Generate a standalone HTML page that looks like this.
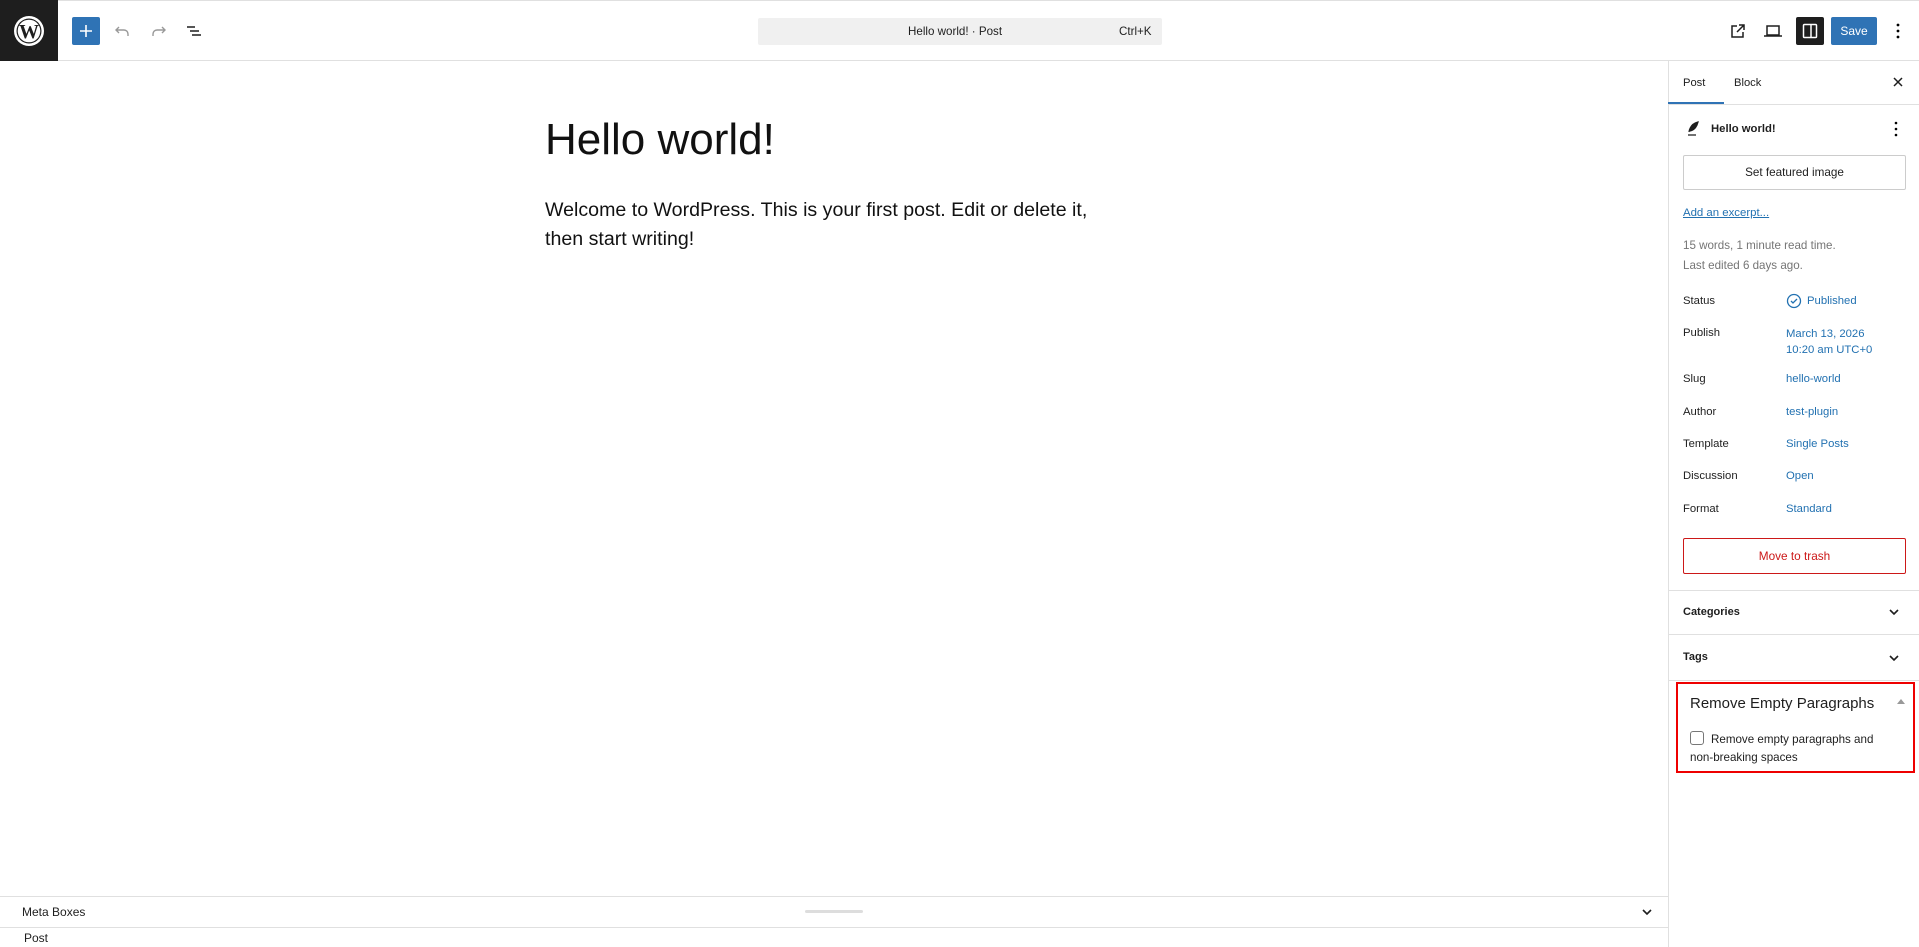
<!DOCTYPE html>
<html><head><meta charset="utf-8"><style>
*{box-sizing:border-box;margin:0;padding:0}
body{width:1919px;height:947px;overflow:hidden;background:#fff;font-family:"Liberation Sans",sans-serif;color:#1e1e1e;position:relative;font-size:11.5px}
.a{position:absolute}
.hdr{left:0;top:0;width:1919px;height:61px;border-top:1px solid #e0e0e0;border-bottom:1px solid #e0e0e0}
.logo{left:0;top:0;width:58px;height:61px;background:#1e1e1e}
.side{left:1668px;top:61px;width:251px;height:886px;border-left:1px solid #e0e0e0}
.lbl{left:1683px;font-size:11.3px;color:#1e1e1e}
.val{left:1786px;font-size:11.3px;color:#2271b1}
.hr{left:1668px;width:251px;height:1px;background:#e0e0e0}
svg{display:block}
</style></head><body>
<div class="a hdr"></div>
<div class="a logo"><svg width="58" height="61" viewBox="0 0 58 61"><circle cx="29" cy="31" r="15" fill="#fff"/><circle cx="29" cy="31" r="12.5" fill="#1e1e1e"/><circle cx="29" cy="31" r="11.3" fill="#fff"/><text x="29" y="38" text-anchor="middle" font-family="Liberation Serif,serif" font-size="20" font-weight="bold" fill="#1e1e1e">W</text></svg></div>
<div class="a" style="left:72px;top:17px;width:28px;height:28px;background:#2f73b5;border-radius:2px"><svg width="28" height="28"><path d="M14 8v12M8 14h12" stroke="#fff" stroke-width="1.6"/></svg></div>
<svg class="a" style="left:113px;top:21px" width="20" height="20"><path d="M6 6l-3 3 3 3M3 9h8a4 4 0 0 1 4 4v2" fill="none" stroke="#999" stroke-width="1.4"/></svg>
<svg class="a" style="left:148px;top:21px" width="20" height="20"><path d="M14 6l3 3-3 3M17 9H9a4 4 0 0 0-4 4v2" fill="none" stroke="#999" stroke-width="1.4"/></svg>
<svg class="a" style="left:185px;top:21px" width="20" height="20"><path d="M2 6h8M5 10h9M7 14h9" stroke="#1e1e1e" stroke-width="1.6"/></svg>
<div class="a" style="left:758px;top:18px;width:404px;height:27px;background:#f0f0f0;border-radius:2px"></div>
<div class="a" style="left:908px;top:25px;font-size:11.6px">Hello world! · Post</div>
<div class="a" style="left:1119px;top:25px;font-size:11.6px">Ctrl+K</div>
<svg class="a" style="left:1729px;top:22px" width="18" height="18"><path d="M8 4H3v11h11v-5M10 3h5v5M15 3l-7 7" fill="none" stroke="#1e1e1e" stroke-width="1.5"/></svg>
<svg class="a" style="left:1763px;top:22px" width="20" height="18"><path d="M4 4h12v9H4zM1 14h18" fill="none" stroke="#1e1e1e" stroke-width="1.5"/></svg>
<div class="a" style="left:1796px;top:17px;width:28px;height:28px;background:#1e1e1e;border-radius:2px"><svg width="28" height="28"><rect x="7.5" y="7.5" width="13" height="13" rx="1" fill="none" stroke="#fff" stroke-width="1.5"/><path d="M15 8v12" stroke="#fff" stroke-width="1.5"/></svg></div>
<div class="a" style="left:1831px;top:17px;width:46px;height:28px;background:#2f73b5;border-radius:2px;color:#fff;font-size:12px;text-align:center;line-height:28px">Save</div>
<svg class="a" style="left:1894px;top:21px" width="8" height="20"><circle cx="4" cy="4" r="1.4"/><circle cx="4" cy="10" r="1.4"/><circle cx="4" cy="16" r="1.4"/></svg>

<div class="a" style="left:545px;top:115px;font-size:44px;color:#111">Hello world!</div>
<div class="a" style="left:545px;top:196px;font-size:19.6px;line-height:28.5px;color:#111;width:560px">Welcome to WordPress. This is your first post. Edit or delete it, then start writing!</div>

<div class="a" style="left:0;top:896px;width:1668px;height:1px;background:#e0e0e0"></div>
<div class="a" style="left:22px;top:905px;font-size:12px">Meta Boxes</div>
<div class="a" style="left:805px;top:910px;width:58px;height:3px;background:#ddd;border-radius:2px"></div>
<svg class="a" style="left:1640px;top:905px" width="14" height="14"><path d="M3 5l4 4 4-4" fill="none" stroke="#1e1e1e" stroke-width="1.6"/></svg>
<div class="a" style="left:0;top:927px;width:1668px;height:1px;background:#e0e0e0"></div>
<div class="a" style="left:24px;top:931px;font-size:12px">Post</div>

<div class="a side"></div>
<div class="a lbl" style="top:77px;font-size:11.2px">Post</div>
<div class="a lbl" style="left:1734px;top:77px;font-size:11.2px">Block</div>
<div class="a" style="left:1668px;top:102px;width:56px;height:2px;background:#2f73b5"></div>
<div class="a hr" style="top:104px"></div>
<svg class="a" style="left:1891px;top:75px" width="14" height="14"><path d="M3 3l8 8M11 3l-8 8" stroke="#1e1e1e" stroke-width="1.5"/></svg>
<svg class="a" style="left:1686px;top:120px" width="14" height="16"><path d="M3 12C4 6 8 3 12 2 11 6 9 10 4 11M2 15h8" fill="#1e1e1e" stroke="#1e1e1e" stroke-width="1.3"/></svg>
<div class="a" style="left:1711px;top:123px;font-weight:bold;font-size:11.3px">Hello world!</div>
<svg class="a" style="left:1892px;top:119px" width="8" height="20"><circle cx="4" cy="4" r="1.3"/><circle cx="4" cy="10" r="1.3"/><circle cx="4" cy="16" r="1.3"/></svg>
<div class="a" style="left:1683px;top:155px;width:223px;height:35px;border:1px solid #ccc;border-radius:2px;text-align:center;line-height:33px;font-size:11.7px">Set featured image</div>
<div class="a" style="left:1683px;top:207px;color:#2271b1;text-decoration:underline;font-size:11.4px">Add an excerpt...</div>
<div class="a" style="left:1683px;top:236px;color:#757575;font-size:11.6px;line-height:19.5px">15 words, 1 minute read time.<br>Last edited 6 days ago.</div>
<div class="a lbl" style="top:295px">Status</div>
<svg class="a" style="left:1786px;top:293px" width="16" height="16"><circle cx="8" cy="8" r="6.5" fill="none" stroke="#2271b1" stroke-width="1.3"/><path d="M5 8l2 2 4-4" fill="none" stroke="#2271b1" stroke-width="1.3"/></svg>
<div class="a val" style="left:1807px;top:295px">Published</div>
<div class="a lbl" style="top:327px">Publish</div>
<div class="a val" style="top:326px;line-height:16px">March 13, 2026<br>10:20 am UTC+0</div>
<div class="a lbl" style="top:373px">Slug</div><div class="a val" style="top:373px">hello-world</div>
<div class="a lbl" style="top:406px">Author</div><div class="a val" style="top:406px">test-plugin</div>
<div class="a lbl" style="top:438px">Template</div><div class="a val" style="top:438px">Single Posts</div>
<div class="a lbl" style="top:470px">Discussion</div><div class="a val" style="top:470px">Open</div>
<div class="a lbl" style="top:503px">Format</div><div class="a val" style="top:503px">Standard</div>
<div class="a" style="left:1683px;top:538px;width:223px;height:36px;border:1px solid #cc1818;border-radius:2px;text-align:center;line-height:34px;color:#cc1818;font-size:11.8px">Move to trash</div>
<div class="a hr" style="top:590px"></div>
<div class="a" style="left:1683px;top:606px;font-weight:bold;font-size:11px">Categories</div>
<svg class="a" style="left:1887px;top:605px" width="14" height="14"><path d="M3 5l4 4 4-4" fill="none" stroke="#1e1e1e" stroke-width="1.6"/></svg>
<div class="a hr" style="top:634px"></div>
<div class="a" style="left:1683px;top:651px;font-weight:bold;font-size:11px">Tags</div>
<svg class="a" style="left:1887px;top:651px" width="14" height="14"><path d="M3 5l4 4 4-4" fill="none" stroke="#1e1e1e" stroke-width="1.6"/></svg>
<div class="a hr" style="top:680px"></div>
<div class="a" style="left:1676px;top:682px;width:239px;height:91px;border:2px solid #e00"></div>
<div class="a" style="left:1690px;top:695px;font-size:15px">Remove Empty Paragraphs</div>
<svg class="a" style="left:1896px;top:697px" width="10" height="10"><path d="M1 7l4-5 4 5z" fill="#999"/></svg>
<div class="a" style="left:1690px;top:731px;width:14px;height:14px;border:1px solid #777;border-radius:3px"></div>
<div class="a" style="left:1690px;top:731px;font-size:11.6px;line-height:18px;width:200px;text-indent:21px">Remove empty paragraphs and non&#8209;breaking spaces</div>
</body></html>
